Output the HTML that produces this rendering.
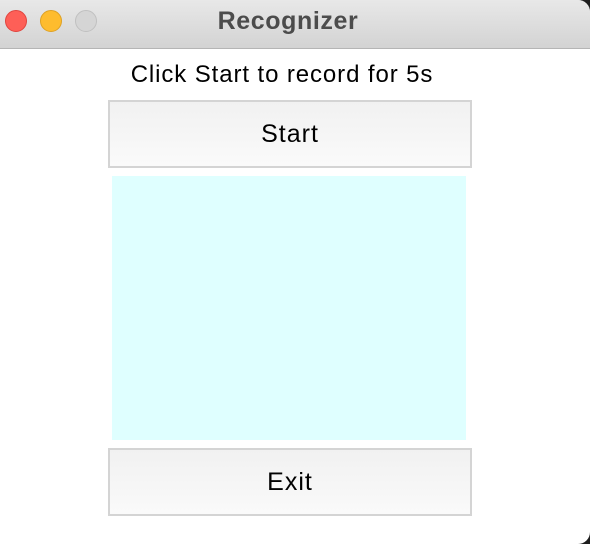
<!DOCTYPE html>
<html><head><style>
body{margin:0;width:590px;height:544px;background:#1e1e1e;overflow:hidden;font-family:"Liberation Sans",sans-serif;position:relative}
.win{position:absolute;left:0;top:0;width:590px;height:544px;background:#fff;border-radius:0 12px 12px 0}
.tb{position:absolute;left:0;top:0;width:590px;height:48px;background:linear-gradient(#e8e8e8,#d3d3d3);border-bottom:1px solid #b5b5b5;border-radius:0 12px 0 0}
.dot{position:absolute;top:10px;width:22px;height:22px;border-radius:50%;box-sizing:border-box}
.title{position:absolute;left:0;width:576px;top:7px;text-align:center;font-weight:bold;font-size:25px;letter-spacing:0.6px;color:#4c4c4c}
.lbl{position:absolute;top:61px;left:0;width:564px;text-align:center;font-size:24px;letter-spacing:0.9px;color:#000}
.btn{position:absolute;left:108px;width:364px;height:68px;box-sizing:border-box;border:2px solid #d4d4d4;background:linear-gradient(#f1f1f1,#fafafa);text-align:center;line-height:64px;font-size:25px;letter-spacing:1px;color:#000}
.cy{position:absolute;left:112px;top:176px;width:354px;height:264px;background:#dfffff}
</style></head><body>
<div class="win">
<div class="tb">
<div class="dot" style="left:5px;background:#fe5f57;border:1px solid #e0443e"></div>
<div class="dot" style="left:40px;background:#febc2e;border:1px solid #dea123"></div>
<div class="dot" style="left:75px;background:#d5d5d5;border:1px solid #c0c0c0"></div>
<div class="title">Recognizer</div>
</div>
<div class="lbl">Click Start to record for 5s</div>
<div class="btn" style="top:100px">Start</div>
<div class="cy"></div>
<div class="btn" style="top:448px">Exit</div>
</div>
</body></html>
